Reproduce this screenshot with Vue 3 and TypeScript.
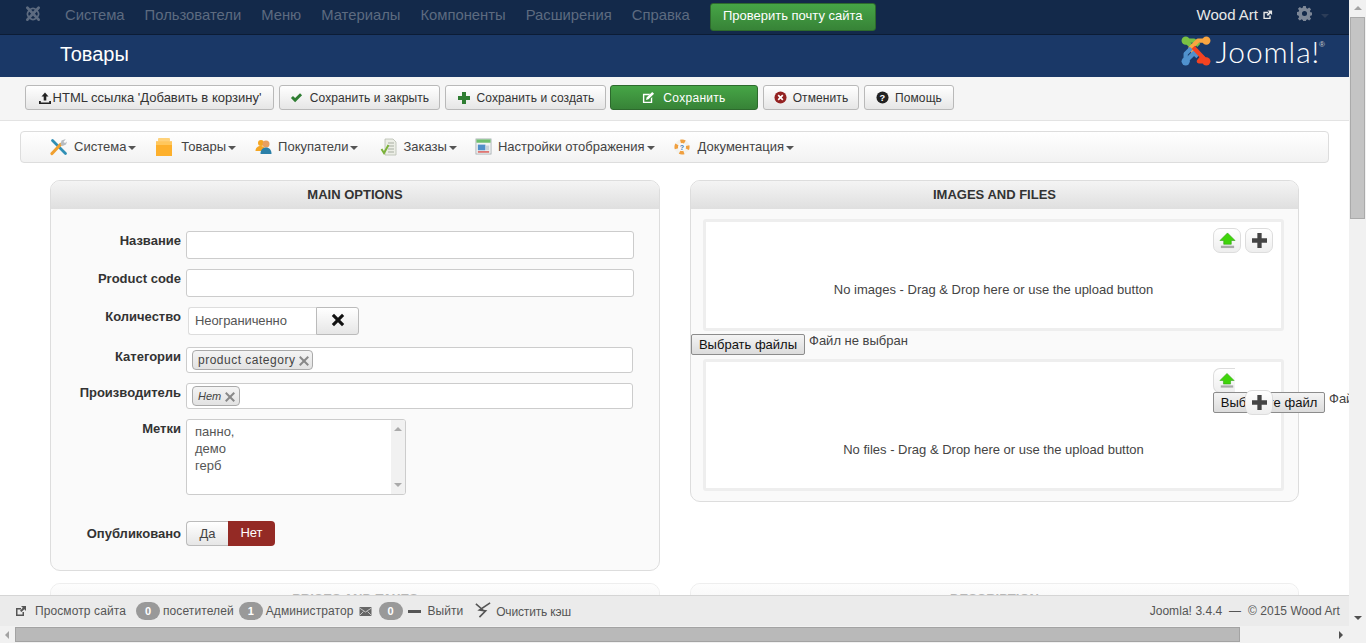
<script setup lang="ts">
const topMenu: string[] = ['Система', 'Пользователи', 'Меню', 'Материалы', 'Компоненты', 'Расширения', 'Справка']
</script>

<template>
  <div class="app">
    <div class="page">
      <div class="topbar">
        <svg class="mark" viewBox="0 0 32 32" width="18" height="18">
          <g fill="none" stroke="#5d6b80" stroke-width="5" stroke-linecap="round">
            <path d="M6 5 L26 26" /><path d="M26 5 L6 26" />
            <path d="M10 9 Q16 3 22 9" stroke-width="3" /><path d="M10 23 Q16 29 22 23" stroke-width="3" />
            <path d="M9 10 Q3 16 9 22" stroke-width="3" /><path d="M23 10 Q29 16 23 22" stroke-width="3" />
          </g>
        </svg>
        <nav class="topnav">
          <span v-for="m in topMenu" :key="m">{{ m }}</span>
        </nav>
        <button class="mail">Проверить почту сайта</button>
        <div class="topright">
          <span class="site">Wood Art</span>
          <svg class="ext" viewBox="0 0 12 12" width="11" height="11">
            <path d="M1.5 3h5v1.5h-3.5v5h5V7h1.5v4h-8z" fill="#e8e8e8" /><path d="M6 1.5h5v5L9.3 4.8 6.5 7.6 5 6.2l2.8-2.9z" fill="#e8e8e8" />
          </svg>
          <svg class="gear" viewBox="0 0 16 16" width="15" height="15">
            <path fill="#7d8797" fill-rule="evenodd" d="M6.6 0h2.8l.4 2.2 1.3.6 1.9-1.3 2 2-1.3 1.9.6 1.3 2.2.4v2.8l-2.2.4-.6 1.3 1.3 1.9-2 2-1.9-1.3-1.3.6-.4 2.2H6.6l-.4-2.2-1.3-.6-1.9 1.3-2-2 1.3-1.9-.6-1.3L-.5 9.4V6.6l2.2-.4.6-1.3-1.3-1.9 2-2 1.9 1.3 1.3-.6zM8 5.3a2.7 2.7 0 1 0 0 5.4 2.7 2.7 0 0 0 0-5.4z" />
          </svg>
          <i class="caret-dark"></i>
        </div>
      </div>

      <header class="titlebar">
        <h1>Товары</h1>
        <div class="brand">
          <svg viewBox="0 0 32 32" width="30" height="30">
            <g fill="none" stroke-width="4.600" stroke-linejoin="round">
              <path d="M5 5 L16 16" stroke="#7ac143" />
              <path d="M5 5 L14 5 L19 10" stroke="#7ac143" />
              <path d="M27 5 L18 5 L10 13 L14 18" stroke="#f9a541" />
              <path d="M5 27 L5 19 L11 13" stroke="#5091cd" />
              <path d="M5 27 L14 18 L18 22" stroke="#5091cd" />
              <path d="M27 27 L13 12" stroke="#f44321" />
              <path d="M27 27 L19 27 L24 21" stroke="#f44321" />
            </g>
            <circle cx="5" cy="5" r="4.400" fill="#7ac143" /><circle cx="27" cy="5" r="4.400" fill="#f9a541" />
            <circle cx="5" cy="27" r="4.400" fill="#5091cd" /><circle cx="27" cy="27" r="4.400" fill="#f44321" />
          </svg>
          <span class="brandname">Joomla!</span><sup class="reg">®</sup>
        </div>
      </header>

      <div class="toolbar">
        <button class="tb b1">
          <svg viewBox="0 0 14 14" width="14" height="14"><path d="M7 1.5 10.5 5.5H8.3V9.5H5.7V5.5H3.5zM1 10h1.8v1.4h8.4V10H13v3H1z" fill="#222" /></svg>
          HTML ссылка 'Добавить в корзину'
        </button>
        <button class="tb b2">
          <svg viewBox="0 0 14 14" width="13" height="13"><path d="M1 7.5 3.2 5.3 5.5 7.6 10.8 2.3 13 4.5 5.5 12z" fill="#2f7d32" /></svg>
          Сохранить и закрыть
        </button>
        <button class="tb b3">
          <svg viewBox="0 0 14 14" width="14" height="14"><path d="M5 1h4v4h4v4H9v4H5V9H1V5h4z" fill="#2f7d32" /></svg>
          Сохранить и создать
        </button>
        <button class="tb save">
          <svg viewBox="0 0 14 14" width="13" height="13"><path d="M1 3h8L7.5 4.5H2.5v7h7V8L11 6.500V13H1z" fill="#fff" /><path d="M11 1l2 2-6 6-2.700.7L5 7z" fill="#fff" /></svg>
          Сохранить
        </button>
        <button class="tb b5">
          <svg viewBox="0 0 14 14" width="13" height="13"><circle cx="7" cy="7" r="6.500" fill="#942222" /><path d="M4.500 4.500l5 5M9.500 4.500l-5 5" stroke="#fff" stroke-width="1.800" /></svg>
          Отменить
        </button>
        <button class="tb b6">
          <svg viewBox="0 0 14 14" width="13" height="13"><circle cx="7" cy="7" r="6.500" fill="#222" /><text x="7" y="10.500" text-anchor="middle" font-size="10" font-weight="700" fill="#fff" font-family="Liberation Sans">?</text></svg>
          Помощь
        </button>
      </div>

      <main class="content">
        <div class="submenu">
          <div class="sm s1">
            <svg viewBox="0 0 18 18" width="18" height="18">
              <path d="M2.500 2.500l13 13" stroke="#2f8fb5" stroke-width="2.800" stroke-linecap="round" />
              <path d="M2 15.500 10.500 6.500" stroke="#f0a030" stroke-width="3.200" stroke-linecap="round" />
              <path d="M15.800 1 11.500 2.500 10.500 6.500l2 1.500 3.500-1.500 1-3-2 1.500-1.500-1z" fill="#b8bcc0" />
            </svg>
            <span>Система</span><i class="caret"></i>
          </div>
          <div class="sm s2">
            <svg viewBox="1 0 16 18" width="16" height="18">
              <rect x="3" y="0" width="12" height="3.500" rx="1" fill="#ffd27a" />
              <rect x="1" y="3.500" width="16" height="14.500" fill="#fdb02c" />
              <rect x="1" y="3.500" width="16" height="3.500" fill="#ffc75c" />
            </svg>
            <span>Товары</span><i class="caret"></i>
          </div>
          <div class="sm s3">
            <svg viewBox="0 0 18 18" width="18" height="18">
              <circle cx="6" cy="5" r="3" fill="#f5a623" /><path d="M0.500 13c0-3 2-5 5.500-5 2 0 3 1 3.500 2v3z" fill="#f5a623" />
              <circle cx="11" cy="6" r="3.500" fill="#e8a060" /><path d="M5.500 16c0-4 2-6.500 5.500-6.500s5.500 2.500 5.500 6.500z" fill="#2a7fa8" />
            </svg>
            <span>Покупатели</span><i class="caret"></i>
          </div>
          <div class="sm s4">
            <svg viewBox="0 0 18 18" width="18" height="18">
              <path d="M5 1h8l3 3v13H5z" fill="#eceee6" stroke="#b7bdb0" stroke-width=".8" />
              <path d="M8 5h6M8 8h6M8 11h6M8 14h6" stroke="#a8aea2" stroke-width="1" />
              <path d="M1.500 11 4 15l4.500-8" fill="none" stroke="#7bb23a" stroke-width="2" />
            </svg>
            <span>Заказы</span><i class="caret"></i>
          </div>
          <div class="sm s5">
            <svg viewBox="0 0 18 18" width="17" height="17">
              <rect x="1" y="1" width="16" height="16" fill="#f2f4f4" stroke="#9fa7ab" stroke-width=".8" />
              <rect x="1.500" y="1.500" width="15" height="3.500" fill="#6ebe6e" />
              <rect x="3" y="7" width="8" height="6" fill="#4f8fc9" />
              <rect x="11.500" y="8" width="3.500" height="5" fill="#c8d3da" />
              <rect x="3" y="14" width="12" height="1.500" fill="#d9534f" />
            </svg>
            <span>Настройки отображения</span><i class="caret"></i>
          </div>
          <div class="sm s6">
            <svg viewBox="0 0 18 18" width="16" height="16">
              <circle cx="9" cy="9" r="6.500" fill="none" stroke="#f2f2ee" stroke-width="4" />
              <circle cx="9" cy="9" r="6.500" fill="none" stroke="#f0a040" stroke-width="4" stroke-dasharray="5.100 5.100" stroke-dashoffset="2.500" />
              <text x="9" y="12" text-anchor="middle" font-size="8" font-weight="700" fill="#3a78b5" font-family="Liberation Sans">?</text>
            </svg>
            <span>Документация</span><i class="caret"></i>
          </div>
        </div>

        <div class="panels">
          <section class="panel main">
            <h2>MAIN OPTIONS</h2>
            <div class="form">
              <div class="row r10">
                <label class="nudge">Название</label>
                <div class="input"></div>
              </div>
              <div class="row r10">
                <label class="nudge">Product code</label>
                <div class="input"></div>
              </div>
              <div class="row r12">
                <label class="nudge">Количество</label>
                <div class="qty">
                  <div class="qty-input">Неограниченно</div>
                  <div class="qty-btn">
                    <svg viewBox="0 0 14 14" width="14" height="14"><path d="M3 .8 7 4.800 11 .8 13.200 3 9.200 7l4 4L11 13.200l-4-4-4 4L.8 11l4-4-4-4z" fill="#111" /></svg>
                  </div>
                </div>
              </div>
              <div class="row r10">
                <label class="nudge">Категории</label>
                <div class="tags"><span class="tag">product category<b class="x"></b></span></div>
              </div>
              <div class="row r10">
                <label class="nudge">Производитель</label>
                <div class="tags"><span class="tag it">Нет<b class="x"></b></span></div>
              </div>
              <div class="row r26">
                <label class="nudge">Метки</label>
                <div class="area">
                  <div class="area-text">панно,<br />демо<br />герб</div>
                  <div class="area-bar"><i class="up"></i><i class="down"></i></div>
                </div>
              </div>
              <div class="row">
                <label class="pub-label">Опубликовано</label>
                <div class="toggle"><span class="yes">Да</span><span class="no">Нет</span></div>
              </div>
            </div>
          </section>

          <section class="panel files">
            <h2>IMAGES AND FILES</h2>
            <div class="files-body">
              <div class="drop d1">
                <div class="drop-btns">
                  <span class="sq up-btn">
                    <svg viewBox="0 0 18 18" width="17" height="17"><path d="M9 1 17 9h-4v4H5V9H1z" fill="#3fd40a" stroke="#2ea010" stroke-width=".6" /><rect x="2" y="14.500" width="14" height="2.500" fill="#a8aaa8" /></svg>
                  </span>
                  <span class="sq">
                    <svg viewBox="0 0 14 14" width="15" height="15"><path d="M5 0h4v5h5v4H9v5H5V9H0V5h5z" fill="#444" /></svg>
                  </span>
                </div>
                <p>No images - Drag &amp; Drop here or use the upload button</p>
              </div>
              <div class="fileline">
                <span class="filebtn">Выбрать файлы</span><span class="nofile">Файл не выбран</span>
              </div>
              <div class="drop d2">
                <span class="sq up-btn clipped">
                  <svg viewBox="0 0 18 18" width="17" height="17"><path d="M9 1 17 9h-4v4H5V9H1z" fill="#3fd40a" stroke="#2ea010" stroke-width=".6" /><rect x="2" y="14.500" width="14" height="2.500" fill="#a8aaa8" /></svg>
                </span>
                <div class="fileline over">
                  <span class="filebtn">Выберите файл</span><span class="nofile">Файл не выбран</span>
                </div>
                <span class="sq plus-over">
                  <svg viewBox="0 0 14 14" width="15" height="15"><path d="M5 0h4v5h5v4H9v5H5V9H0V5h5z" fill="#444" /></svg>
                </span>
                <p>No files - Drag &amp; Drop here or use the upload button</p>
              </div>
            </div>
          </section>

          <section class="panel faded"><h2>PRICES AND TAXES</h2></section>
          <section class="panel faded"><h2>DESCRIPTION</h2></section>
        </div>
      </main>

      <footer class="footer">
        <svg class="fi" viewBox="0 0 12 12" width="12" height="12">
          <path d="M1 3h5v1.500H2.500v5h5V7H9v4H1z" fill="#555" /><path d="M6 1h5v5L9.300 4.300 6.500 7.100 5 5.700l2.800-2.900z" fill="#555" />
        </svg>
        <span class="f-view">Просмотр сайта</span>
        <span class="pill p1">0</span><span class="f-vis">посетителей</span>
        <span class="pill p2">1</span><span class="f-adm">Администратор</span>
        <svg class="env" viewBox="0 0 12 9" width="13" height="9"><rect width="12" height="9" fill="#666" /><path d="M0 1l6 4 6-4M0 8.500l4-4M12 8.500l-4-4" fill="none" stroke="#ddd" stroke-width=".8" /></svg>
        <span class="pill p3">0</span>
        <i class="dash"></i>
        <span class="f-out">Выйти</span>
        <svg class="bolt" viewBox="0 0 18 18" width="16" height="16">
          <path d="M1 2l8 7M17 1 5 9l7 1-7 7" fill="none" stroke="#555" stroke-width="1.800" />
        </svg>
        <span class="f-cache">Очистить кэш</span>
        <span class="copy">Joomla! 3.4.4 &nbsp;—&nbsp; © 2015 Wood Art</span>
      </footer>
    </div>

    <div class="vbar">
      <i class="up"></i>
      <div class="vthumb"></div>
      <i class="down"></i>
    </div>
    <div class="hbar">
      <i class="left"></i>
      <div class="hthumb"></div>
      <i class="right"></i>
    </div>
    <div class="corner"></div>
  </div>
</template>

<style scoped>
* { box-sizing: border-box; }
.app {
  width: 1366px; height: 643px; overflow: hidden;
  display: grid; grid-template-columns: 1349px 17px; grid-template-rows: 626px 17px;
  font-family: "Liberation Sans", Arial, sans-serif; color: #333; background: #fff;
}
.page { display: flex; flex-direction: column; overflow: hidden; min-height: 0; }

.topbar {
  height: 35px; flex: none; display: flex; align-items: center;
  background: #13294a; border-bottom: 1px solid #0c1c35; padding-left: 24px;
}
.mark { flex: none; margin-top: -6px; }
.topnav { display: flex; gap: 20px; margin-left: 23px; margin-top: -5px; font-size: 14.8px; color: #5d6b80; }
.mail {
  margin-left: 20px; margin-top: -1px; width: 166px; height: 28px; padding: 0 0 2px;
  font: 13px "Liberation Sans", Arial, sans-serif; color: #fff;
  border: 1px solid #2d6a2d; border-radius: 3px;
  background: linear-gradient(#46a546, #378337);
}
.topright { margin-left: auto; display: flex; align-items: center; margin-top: -5px; }
.site { font-size: 15px; color: #e8e8e8; }
.ext { margin-left: 4px; }
.gear { margin-left: 24px; margin-top: -2px; }
.caret-dark { width: 0; height: 0; margin: 2px 20px 0 9px; border: 4px solid transparent; border-top-color: #2c3d58; border-bottom: 0; }

.titlebar {
  height: 42px; flex: none; background: #1a3867; display: flex; justify-content: space-between; align-items: flex-start;
  padding: 0 24px 0 60px;
}
.titlebar h1 { margin: 7px 0 0; font-size: 20px; line-height: 24px; font-weight: 400; color: #fff; }
.brand { display: flex; align-items: center; margin-top: 1px; height: 30px; }
.brandname { font: 300 30px/30px Lato, "Open Sans", sans-serif; color: #fff; margin-left: 5px; letter-spacing: .9px; }
.reg { font-size: 8px; color: #ccc; align-self: flex-start; margin: 5px 0 0 -1px; line-height: 8px; }

.toolbar {
  height: 44px; flex: none; display: flex; gap: 5px; padding: 8px 0 0 25px;
  background: #f5f5f5; border-bottom: 1px solid #e3e3e3;
}
.tb {
  height: 25px; display: flex; align-items: center; justify-content: center; gap: 6px; padding: 0;
  font: 12px "Liberation Sans", Arial, sans-serif; letter-spacing: .1px; color: #333;
  border: 1px solid #b9b9b9; border-radius: 3px;
  background: linear-gradient(#fff, #e6e6e6);
}
.tb.b1 { width: 249px; gap: 1px; font-size: 13px; letter-spacing: 0; }
.tb.b2 { width: 161px; gap: 7px; }
.tb.b3 { width: 161px; }
.tb.save { width: 148px; margin-left: -1px; color: #fff; border-color: #2d6a2d; background: linear-gradient(#46a546, #378337); gap: 8px; letter-spacing: .3px; }
.tb.b5 { width: 96px; }
.tb.b6 { width: 90px; }

.content { flex: 1; min-height: 0; overflow: hidden; padding-top: 10px; background: #fff; }
.submenu {
  height: 32px; margin: 0 20px; border: 1px solid #ddd; border-radius: 4px;
  background: linear-gradient(#fff, #f2f2f2);
  display: flex; align-items: center; padding-left: 29px; font-size: 13px; color: #444; padding-bottom: 1px;
}
.sm { display: flex; align-items: center; }
.sm span { margin-left: 6px; }
.s2 { margin-left: 20px; } .s2 span { margin-left: 9px; }
.s3 { margin-left: 19px; } .s3 span { margin-left: 5px; }
.s4 { margin-left: 22px; } .s4 span { margin-left: 5px; }
.s5 { margin-left: 18px; } .s5 span { margin-left: 6px; }
.s6 { margin-left: 19px; } .s6 span { margin-left: 8px; }
.caret { width: 0; height: 0; margin: 2px 0 0 2px; border: 4px solid transparent; border-top-color: #555; border-bottom: 0; }

.panels {
  display: grid; grid-template-columns: 610px 609px; column-gap: 30px; row-gap: 12px;
  padding: 17px 0 0 30px; margin-left: 20px; align-items: start;
}
.panel { border: 1px solid #ddd; border-radius: 10px; background: #fafafa; }
.panel h2 {
  margin: 0; height: 28px; font-size: 13px; line-height: 27px; font-weight: 700; text-align: center; color: #333;
  background: linear-gradient(#f4f4f4, #dfdfdf); border-radius: 9px 9px 0 0;
}
.panel.main { height: 391px; }
.panel.files { height: 322px; }
.panel.faded { height: 60px; border-color: #eee; }
.panel.faded h2 { background: linear-gradient(#fdfdfd, #f4f4f4); color: #b8b8b8; padding-top: 1px; }

.form { padding-top: 22px; }
.row { display: grid; grid-template-columns: 130px 448px; column-gap: 5px; align-items: start; }
.r10 { margin-bottom: 10px; } .r12 { margin-bottom: 12px; } .r26 { margin-bottom: 26px; }
label { text-align: right; font-size: 13px; font-weight: 700; line-height: 18px; color: #333; }
.nudge { padding-top: 1px; }
.input { height: 28px; border: 1px solid #ccc; border-radius: 3px; background: #fff; }
.qty { display: flex; height: 28px; margin-left: 2px; width: 171px; }
.qty-input { width: 128px; border: 1px solid #ddd; border-right: 0; border-radius: 3px 0 0 3px; background: #fff; font-size: 13px; letter-spacing: -.1px; color: #555; line-height: 26px; padding-left: 6px; }
.qty-btn { width: 43px; display: flex; align-items: center; justify-content: center; border: 1px solid #bbb; border-radius: 0 3px 3px 0; background: linear-gradient(#fff, #e6e6e6); padding-bottom: 2px; }
.tags { width: 447px; height: 26px; border: 1px solid #ccc; border-radius: 3px; background: #fff; padding: 2px 0 0 5px; }
.tag {
  display: inline-flex; align-items: center; height: 20px; padding: 0 3px 0 5px; font-size: 12px; letter-spacing: .5px; color: #444;
  border: 1px solid #aaa; border-radius: 4px; background: linear-gradient(#f4f4f4, #e2e2e2);
}
.tag.it { font-style: italic; letter-spacing: 0; font-size: 11px; padding-right: 4px; }
.x { position: relative; display: inline-block; width: 10px; height: 10px; margin-left: 4px; margin-top: 2px; }
.x::before, .x::after { content: ""; position: absolute; left: 4px; top: -1px; width: 2px; height: 12px; background: #888; transform: rotate(45deg); }
.x::after { transform: rotate(-45deg); }
.area { display: flex; width: 220px; height: 76px; border: 1px solid #ccc; border-radius: 3px; background: #fff; overflow: hidden; }
.area-text { flex: 1; padding: 3px 0 0 8px; font-size: 13px; line-height: 17px; color: #555; }
.area-bar { width: 14px; background: #f1f1f1; display: flex; flex-direction: column; justify-content: space-between; align-items: center; padding: 7px 0; }
.up { width: 0; height: 0; border: 4px solid transparent; border-bottom-color: #aaa; border-top: 0; }
.down { width: 0; height: 0; border: 4px solid transparent; border-top-color: #aaa; border-bottom: 0; }
.pub-label { line-height: 25px; }
.toggle { display: flex; width: 89px; height: 25px; font-size: 13px; line-height: 24px; text-align: center; }
.yes { width: 42px; border: 1px solid #bbb; border-right: 0; border-radius: 4px 0 0 4px; background: linear-gradient(#fff, #e6e6e6); color: #444; }
.no { width: 47px; border-radius: 0 4px 4px 0; background: #942a25; color: #fff; }

.files-body { padding-top: 10px; }
.drop { position: relative; margin-left: 12px; width: 581px; border: 3px solid #eee; border-radius: 3px; background: #fff; font-size: 13px; color: #444; text-align: center; }
.drop p { margin: 0; }
.d1 { height: 112px; padding-top: 60px; }
.d2 { height: 132px; padding-top: 80px; }
.drop-btns { position: absolute; left: 507px; top: 6px; display: flex; gap: 4px; }
.sq { display: flex; align-items: center; justify-content: center; width: 28px; height: 25px; border: 1px solid #ddd; border-radius: 7px; background: linear-gradient(#fff, #eee); }
.clipped { position: absolute; left: 507px; top: 6px; width: 22px; border-right: 0; border-radius: 7px 0 0 7px; justify-content: flex-start; padding-left: 5px; }
.plus-over { position: absolute; left: 539px; top: 28px; z-index: 2; }
.fileline { display: flex; align-items: flex-start; height: 28px; padding-top: 3px; white-space: nowrap; }
.filebtn {
  display: block; flex: none; width: 114px; height: 21px; text-align: center; font-size: 13px; line-height: 19px; color: #111;
  border: 1px solid #8c8c8c; background: linear-gradient(#f4f4f4, #dcdcdc); border-radius: 2px;
}
.nofile { margin-left: 4px; font-size: 13px; line-height: 14px; color: #444; }
.over { position: absolute; left: 507px; top: 30px; padding-top: 0; }
.over .filebtn { width: 112px; }

.footer {
  height: 31px; flex: none; display: flex; align-items: center; position: relative;
  background: #ebebeb; border-top: 1px solid #d5d5d5; font-size: 12px; color: #555; padding-left: 15px;
}
.f-view { margin-left: 8px; letter-spacing: .1px; }
.pill { display: inline-block; width: 24px; height: 18px; border-radius: 9px; background: #999; color: #fff; font-size: 11px; font-weight: 700; text-align: center; line-height: 18px; }
.p1 { margin-left: 10px; } .f-vis { margin-left: 3px; letter-spacing: .1px; }
.p2 { margin-left: 5px; } .f-adm { margin-left: 3px; letter-spacing: .1px; }
.env { margin-left: 5px; } .p3 { margin-left: 7px; }
.dash { width: 13px; height: 3px; background: #555; margin-left: 5px; }
.f-out { margin-left: 7px; }
.bolt { margin-left: 12px; margin-top: -3px; }
.f-cache { margin-left: 5px; margin-top: 2px; letter-spacing: -.15px; }
.copy { margin-left: auto; padding-right: 9px; letter-spacing: .05px; }

.vbar { background: #f1f1f1; display: flex; flex-direction: column; align-items: center; padding: 6px 0; }
.vbar .up { border-bottom-color: #a3a3a3; }
.vbar .down { border-top-color: #505050; margin-top: auto; }
.vthumb { width: 15px; height: 202px; margin-top: 7px; background: #c4c4c4; border: 1px solid #aaa; }
.hbar { background: #f1f1f1; display: flex; align-items: center; padding: 0 6px 0 5px; }
.left { width: 0; height: 0; border: 4px solid transparent; border-right-color: #a3a3a3; border-left: 0; }
.right { width: 0; height: 0; border: 4px solid transparent; border-left-color: #505050; border-right: 0; margin-left: auto; }
.hthumb { width: 1225px; height: 15px; margin-left: 6px; background: #b9b9b9; border: 1px solid #a3a3a3; }
.corner { background: #f1f1f1; }
</style>
